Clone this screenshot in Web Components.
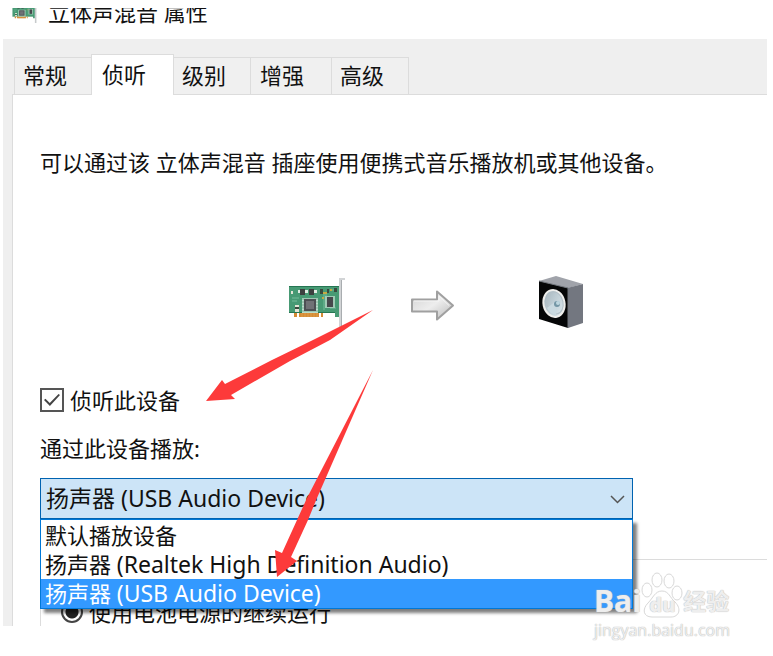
<!DOCTYPE html>
<html lang="zh-CN">
<head>
<meta charset="utf-8">
<title>立体声混音 属性</title>
<style>
body {
    margin: 0;
    background: #fff;
    color: #111;
    font: 22px/30px "Noto Sans", "Noto Sans CJK SC", sans-serif;
}
</style>
</head>
<body>
<properties-window>
    <sound-card-icon slot="icon"></sound-card-icon>
    <span slot="title">立体声混音 属性</span>
    <tab-strip>
        <tab-button>常规</tab-button>
        <tab-button active wide>侦听</tab-button>
        <tab-button>级别</tab-button>
        <tab-button wide>增强</tab-button>
        <tab-button>高级</tab-button>
    </tab-strip>
    <listen-panel></listen-panel>
    <pointer-arrows slot="overlay"></pointer-arrows>
    <site-watermark slot="overlay"></site-watermark>
</properties-window>

<script>
class PropertiesWindow extends HTMLElement {
    connectedCallback() {
        this.attachShadow({mode: 'open'}).innerHTML = `<style>
:host { display: block; position: relative; padding: 8px 6px 30px 3px; }
header { display: flex; height: 31px; overflow: hidden; }
.icon { width: 26px; height: 24px; margin: -8px 10px 0 9px; }
.title { margin-top: -11px; }
main { background: #efefef; padding: 15px 0 0 9px; }
</style>
<header><div class="icon"><slot name="icon"></slot></div><div class="title"><slot name="title"></slot></div></header>
<main><slot></slot></main>
<slot name="overlay"></slot>`;
    }
}

class TabStrip extends HTMLElement {
    connectedCallback() {
        this.attachShadow({mode: 'open'}).innerHTML = `<style>
:host { display: flex; align-items: flex-end; padding-left: 2px; }
</style><slot></slot>`;
        this.setAttribute('role', 'tablist');
    }
}

class TabButton extends HTMLElement {
    connectedCallback() {
        let selected = this.hasAttribute('active');
        this.attachShadow({mode: 'open'}).innerHTML = `<style>
:host { display: block; margin-right: -1px; }
button {
    display: block; height: 37px; padding: 0 24px 2px 8px;
    border: 1px solid #dcdcdc; border-bottom: 0;
    background: #f0f0f0; color: inherit; font: inherit;
}
:host([wide]) button { padding: 0 27px 2px 9px; }
:host([active]) { position: relative; margin-bottom: -1px; }
:host([active]) button { height: 41px; padding: 0 27px 2px 10px; background: #fff; }
</style><button type="button" role="tab" aria-selected="${selected}"><slot></slot></button>`;
    }
}

class SoundCardIcon extends HTMLElement {
    connectedCallback() {
        this.attachShadow({mode: 'open'}).innerHTML = `<style>
:host { display: block; }
svg { display: block; width: 100%; height: auto; }
</style>
<svg viewBox="0 0 58 52" aria-hidden="true">
<path d="M1 10h50v31h-4v-4H1z" fill="#479a74"/>
<path d="M1 10h50v1H1zM1 36h46v1H1z" fill="#267653"/>
<path d="M6 37h3v4H6zm5 0h20v4H11zm22 0h2v4h-2z" fill="#d58b35"/>
<path d="M14 37v4m3-4v4m3-4v4m3-4v4m3-4v4m3-4v4" stroke="#dd9d4a"/>
<g fill="none" stroke="#75bc99"><path d="M4 22h7m-7 3h5m27-8v17m2-17v15m4-18h7m-7 18h6"/></g>
<path d="M14 22h16v15H14z" fill="#b9dccb"/>
<path d="M14 23h16m-16 3h16m-16 3h16m-16 3h16m-16 3h16" stroke="#7fb096"/>
<path d="M16 23h12v12H16z" fill="#4d5054"/><path d="M18 25h8v8h-8z" fill="#707276"/>
<path d="M37 20h10v12H37z" fill="#9fcbb5"/>
<path d="M39 21h6v10h-6z" fill="#46494c"/>
<path d="M12 13h5v6h-5zm9 0h5v6h-5z" fill="#3c403f"/>
<path d="M10 14h2v3h-2zm7 0h3v3h-3zm9 0h3v3h-3z" fill="#e0ece2"/>
<path d="M7 29h4v2H7zm0 4h4v3H7zM3 15h2v3H3z" fill="#e4e5d5"/>
<path d="M7 31h4v2H7zM32 13h3v5h-3zm7 0h2v4h-2zm7-1h3v4h-3z" fill="#394a3e"/>
<path d="M35 16h4v2h-4zm-1 5h2v2h-2zm8-8h2v2h-2z" fill="#c5aa42"/>
<path d="M51 2h6v2h-3v48h-3z" fill="#d2d4d6"/><path d="M53 4h1v48h-1z" fill="#a9adb0"/>
</svg>`;
    }
}

class ArrowIcon extends HTMLElement {
    connectedCallback() {
        this.attachShadow({mode: 'open'}).innerHTML = `<style>
:host { display: block; }
svg { display: block; }
</style>
<svg width="62" height="52" viewBox="0 0 62 52" aria-hidden="true">
<defs><linearGradient id="g" x2="1" y2="1"><stop offset="0" stop-color="#d2d2d2"/><stop offset=".5" stop-color="#ededed"/><stop offset="1" stop-color="#b8b8b8"/></linearGradient></defs>
<path d="M1 23.500h25v-8L42 29.500 26 43.500v-8H1z" fill="url(#g)" stroke="#a0a0a0" stroke-width="2" stroke-linejoin="round"/>
<path d="M3 25h25v-5l10 9.500" fill="none" stroke="#f5f5f5"/>
</svg>`;
    }
}

class SpeakerIcon extends HTMLElement {
    connectedCallback() {
        this.attachShadow({mode: 'open'}).innerHTML = `<style>
:host { display: block; }
svg { display: block; }
</style>
<svg width="48" height="52" viewBox="0 0 48 52" aria-hidden="true">
<defs><linearGradient id="c" x2="1" y2="1"><stop offset="0" stop-color="#9fb0b9"/><stop offset="1" stop-color="#e1edf2"/></linearGradient></defs>
<path d="M1 5 18 0l27 8-15 4z" fill="#a0a3aa"/>
<path d="m29 12 16-4v39l-15 5z" fill="#737780"/>
<path d="m1 5 29 7v40L1 43z" fill="#050607"/>
<path d="m1 5 29 7v40" fill="none" stroke="#70757c"/>
<ellipse cx="16" cy="27.500" rx="10.500" ry="13.500" transform="rotate(-12 16 27.500)" fill="url(#c)" stroke="#eeeeec" stroke-width="2"/>
<ellipse cx="17" cy="27" rx="8" ry="11" transform="rotate(-12 17 27)" fill="none" stroke="#b4c1c8"/>
<path d="m18 25-9 7q3 6 9 7z" fill="#c9d9e0"/>
<circle cx="19" cy="28" r="3" fill="#7496a5"/><circle cx="20" cy="27" r="2" fill="#bdd6df"/>
</svg>`;
    }
}

class DeviceSelect extends HTMLElement {
    connectedCallback() {
        let devices = ['默认播放设备', '扬声器 (Realtek High Definition Audio)', '扬声器 (USB Audio Device)'];
        let current = 2;
        this.attachShadow({mode: 'open'}).innerHTML = `<style>
:host { display: block; }
label { display: block; }
.field { position: relative; margin-top: 15px; max-width: 593px; }
select {
    appearance: none; display: block; box-sizing: border-box; width: 100%; height: 41px;
    padding: 0 32px 2px 5px; border: 1px solid #0063b1; border-radius: 0;
    background: #cce4f7; color: inherit; font: inherit; font-size: 23px; outline: 0;
}
svg { position: absolute; right: 8px; top: 17px; }
ul {
    position: absolute; z-index: 1; left: 0; right: 0; top: 100%;
    margin: 0; padding: 1px 0 0; border: 1px solid #0078d7; list-style: none;
    background: #fff; box-shadow: 4px 4px 3px rgba(0, 0, 0, .5); line-height: 29px;
}
li { height: 29px; padding-left: 4px; white-space: nowrap; }
.latin { font-size: 23px; }
li[aria-selected=true] { background: #3399ff; color: #fff; }
</style>
<label for="device">通过此设备播放:</label>
<div class="field">
    <select id="device">${devices.map((d, i) => `<option${i == current ? ' selected' : ''}>${d}</option>`).join('')}</select>
    <svg width="15" height="9" viewBox="0 0 15 9" aria-hidden="true"><path d="m1 1 6.500 6.500L14 1" fill="none" stroke="#555" stroke-width="1.500"/></svg>
    <ul role="listbox">${devices.map((d, i) => `<li role="option" aria-selected="${i == current}">${d.replace(/\(.*\)/, '<span class="latin">$&</span>')}</li>`).join('')}</ul>
</div>`;
        let select = this.shadowRoot.querySelector('select');
        let items = this.shadowRoot.querySelectorAll('li');
        items.forEach((item, i) => item.addEventListener('click', () => {
            select.selectedIndex = i;
            items.forEach((li) => li.setAttribute('aria-selected', li == item));
        }));
    }
}

class ListenPanel extends HTMLElement {
    connectedCallback() {
        this.attachShadow({mode: 'open'}).innerHTML = `<style>
:host { display: block; border: solid #dcdcdc; border-width: 1px 0 0 1px; background: #fff; padding: 52px 0 0 27px; }
p { margin: 0; }
.route { display: flex; gap: 65px; margin-top: 99px; padding-left: 248px; }
sound-card-icon { width: 58px; }
.check { display: flex; align-items: center; gap: 6px; margin: 57px 0 18px; }
input { appearance: none; flex: none; margin: 0; box-sizing: border-box; }
input[type=checkbox] { width: 24px; height: 24px; border: 2px solid #555; display: grid; place-items: center; }
input[type=checkbox]:checked::before {
    content: ""; width: 16px; height: 12px; background: #444;
    clip-path: polygon(0 50%, 9% 40%, 36% 76%, 91% 0, 100% 8%, 37% 100%);
}
.power { margin-top: 40px; border: solid #dcdcdc; border-width: 1px 0 0 1px; padding: 38px 0 0 20px; }
.power label { display: flex; align-items: center; gap: 6px; line-height: 28px; }
input[type=radio] {
    width: 22px; height: 22px; border: 2px solid #444; border-radius: 50%;
    background: radial-gradient(circle, #222 6px, #fff 7px);
}
</style>
<p>可以通过该 立体声混音 插座使用便携式音乐播放机或其他设备。</p>
<div class="route"><sound-card-icon></sound-card-icon><arrow-icon></arrow-icon><speaker-icon></speaker-icon></div>
<label class="check"><input type="checkbox" checked>侦听此设备</label>
<device-select></device-select>
<div class="power"><label><input type="radio" name="power" checked>使用电池电源的继续运行</label></div>`;
    }
}

class PointerArrows extends HTMLElement {
    connectedCallback() {
        this.attachShadow({mode: 'open'}).innerHTML = `<style>
:host { position: absolute; z-index: 2; left: 200px; top: 300px; pointer-events: none; }
svg { display: block; }
</style>
<svg width="180" height="280" viewBox="200 300 180 280" fill="#fd3a3a" aria-hidden="true">
<path d="M206 401 222 380l3 4 47-24 41-20 60-30-43 30-40 21-59 34 4 4z"/>
<path d="m277 577-2-27 7 3 15-33 10-22 66-128-56 128-9 22-17 37 6 4z"/>
</svg>`;
    }
}

class SiteWatermark extends HTMLElement {
    connectedCallback() {
        this.attachShadow({mode: 'open'}).innerHTML = `<style>
:host {
    position: absolute; z-index: 2; right: 43px; bottom: 16px; pointer-events: none;
    color: rgba(255, 255, 255, .75); font-family: "Open Sans", "Noto Sans CJK SC", sans-serif; font-weight: 700;
    text-shadow: 0 0 1px #bbb, 0 0 1px #bbb;
}
.brand { display: flex; align-items: center; height: 50px; font-size: 30px; line-height: 50px; }
.brand span { padding-top: 12px; }
.brand .cn { font-size: 23px; }
.paw { position: relative; width: 42px; height: 46px; }
.paw b { position: absolute; left: 0; right: 0; top: 23px; text-align: center; font-size: 20px; line-height: 20px; }
.url { font-size: 16px; line-height: 20px; font-weight: 400; }
</style>
<div class="brand"><span>Bai</span><div class="paw">
<svg width="42" height="46" viewBox="0 0 42 46" fill="#fff" fill-opacity=".5" stroke="#d8d8d8" aria-hidden="true">
<ellipse cx="6" cy="18" rx="5" ry="7"/><ellipse cx="16" cy="8" rx="5" ry="7"/><ellipse cx="28" cy="9" rx="5" ry="7"/><ellipse cx="36" cy="21" rx="5" ry="7"/>
<path d="M21 19c7 0 8 7 13 11 7 7 4 15-4 15H11C2 45 1 37 7 31c5-5 7-12 14-12z"/>
</svg><b>du</b></div><span class="cn">经验</span></div>
<div class="url">jingyan.baidu.com</div>`;
    }
}

window.customElements.define('properties-window', PropertiesWindow);
window.customElements.define('tab-strip', TabStrip);
window.customElements.define('tab-button', TabButton);
window.customElements.define('sound-card-icon', SoundCardIcon);
window.customElements.define('arrow-icon', ArrowIcon);
window.customElements.define('speaker-icon', SpeakerIcon);
window.customElements.define('device-select', DeviceSelect);
window.customElements.define('listen-panel', ListenPanel);
window.customElements.define('pointer-arrows', PointerArrows);
window.customElements.define('site-watermark', SiteWatermark);
</script>
</body>
</html>
